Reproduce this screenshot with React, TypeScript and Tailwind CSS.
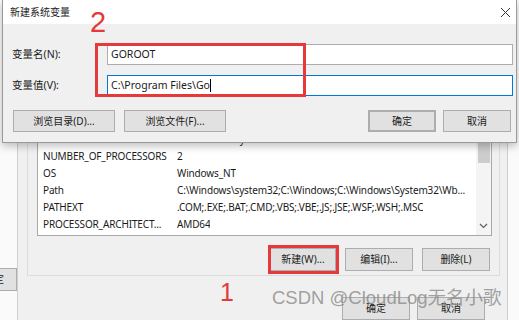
import React from "react";

const cjk = { fontFamily: '"Noto Sans", "Noto Sans CJK SC", sans-serif' };

function Btn({ children, className = "" }: { children: React.ReactNode; className?: string }) {
  return (
    <div
      className={`flex items-center justify-center bg-[#e1e1e1] border border-[#adadad] text-[10px] text-[#1a1a1a] ${className}`}
    >
      {children}
    </div>
  );
}

const rows: [string, string][] = [
  ["DriverData", "C:\\Windows\\System32\\Drivers\\DriverData"],
  ["NUMBER_OF_PROCESSORS", "2"],
  ["OS", "Windows_NT"],
  ["Path", "C:\\Windows\\system32;C:\\Windows;C:\\Windows\\System32\\Wb..."],
  ["PATHEXT", ".COM;.EXE;.BAT;.CMD;.VBS;.VBE;.JS;.JSE;.WSF;.WSH;.MSC"],
  ["PROCESSOR_ARCHITECT...", "AMD64"],
];

export default function App() {
  return (
    <div className="relative w-[519px] h-[320px] overflow-hidden bg-[#fafafa] text-[#1a1a1a]" style={cjk}>
      {/* background windows */}
      <div className="flex h-[320px]">
        {/* far-left window strip */}
        <div className="w-[17px] shrink-0 flex flex-col">
          <div className="mt-[268px] h-[23px] w-[17px] overflow-hidden bg-[#e1e1e1] border-y border-r border-[#adadad] flex items-center">
            <span className="ml-[-6px] text-[10px]">定</span>
          </div>
        </div>
        {/* environment variables window */}
        <div className="w-[491px] shrink-0 bg-[#f0f0f0] border-l border-r border-[#cfcfcf] flex flex-col">
          <div className="ml-[9px] mt-[60px] w-[473px] h-[223px] border border-[#dcdcdc] flex flex-col pl-[9px] pr-[7px] pt-[9px]">
            <div className="h-[166px] w-[455px] bg-white border border-[#a9a9a9] flex">
              <div className="flex-1 flex flex-col justify-end pb-[2px] pl-[5px] overflow-hidden text-[10px] tracking-[-0.15px]">
                {rows.map(([k, v]) => (
                  <div key={k} className="h-[17px] flex items-center whitespace-nowrap">
                    <span className="w-[134px] shrink-0">{k}</span>
                    <span className="overflow-hidden">{v}</span>
                  </div>
                ))}
              </div>
              <div className="w-[15px] bg-[#f4f4f4] flex flex-col items-center">
                <div className="mt-[40px] w-[12px] h-[52px] bg-[#cdcdcd]" />
                <div className="flex-1" />
                <svg width="9" height="6" viewBox="0 0 9 6" className="mb-[6px]">
                  <path d="M1 1 L4.5 4.5 L8 1" fill="none" stroke="#606060" strokeWidth="1.2" />
                </svg>
              </div>
            </div>
            <div className="mt-[12px] flex justify-end gap-[9px] pr-[2px]">
              <Btn className="w-[66px] h-[23px]">新建(W)...</Btn>
              <Btn className="w-[68px] h-[23px]">编辑(I)...</Btn>
              <Btn className="w-[68px] h-[23px]">删除(L)</Btn>
            </div>
          </div>
          <div className="mt-[21px] flex justify-end gap-[7px] pr-[22px]">
            <Btn className="w-[68px] h-[23px]">确定</Btn>
            <Btn className="w-[68px] h-[23px]">取消</Btn>
          </div>
        </div>
        <div className="flex-1 bg-[#fafafa]" />
      </div>

      {/* top dialog */}
      <div className="absolute left-[2px] top-0 w-[515px] h-[143px] border-x border-b border-[#9a9a9a] bg-[#f0f0f0] shadow-[0_3px_8px_rgba(0,0,0,0.25)] flex flex-col">
        <div className="h-[24px] bg-white flex items-center pl-[7px] pr-[5px] text-[10px]">
          <span>新建系统变量</span>
          <div className="flex-1" />
          <svg width="11" height="11" viewBox="0 0 11 11">
            <path d="M1 1 L10 10 M10 1 L1 10" stroke="#333" strokeWidth="1" />
          </svg>
        </div>
        <div className="flex flex-col pl-[9px] pr-[3px] pt-[20px]">
          <div className="flex items-center h-[21px]">
            <span className="w-[95px] text-[10.5px]">变量名(N):</span>
            <div className="w-[406px] h-[21px] bg-white border border-[#adadad] flex items-center pl-[3px] text-[10.5px]">
              GOROOT
            </div>
          </div>
          <div className="flex items-center h-[21px] mt-[10px]">
            <span className="w-[95px] text-[10.5px]">变量值(V):</span>
            <div className="w-[406px] h-[21px] bg-white border border-[#0078d7] flex items-center pl-[3px] text-[10.5px]">
              <span>C:\Program Files\Go</span>
              <span className="w-px h-[13px] bg-black" />
            </div>
          </div>
          <div className="flex items-center mt-[14px] h-[22px]">
            <Btn className="w-[102px] h-[22px] ml-[1px]">浏览目录(D)...</Btn>
            <Btn className="w-[102px] h-[22px] ml-[9px]">浏览文件(F)...</Btn>
            <div className="flex-1" />
            <Btn className="w-[68px] h-[22px] border-[#0078d7] border-2">确定</Btn>
            <Btn className="w-[68px] h-[22px] ml-[7px] mr-[2px]">取消</Btn>
          </div>
        </div>
      </div>

      {/* annotations */}
      <div className="absolute left-[95px] top-[43px] w-[211px] h-[54px] border-[3px] border-[#e5393b]" />
      <div
        className="absolute left-[90px] top-[8px] text-[29px] leading-none text-[#e5393b]"
        style={{ fontFamily: '"Liberation Sans", sans-serif' }}
      >
        2
      </div>
      <div className="absolute left-[268px] top-[245px] w-[71px] h-[29px] border-[3px] border-[#e5393b]" />
      <div
        className="absolute left-[220px] top-[280px] text-[25px] leading-none text-[#e5393b]"
        style={{ fontFamily: '"Liberation Sans", sans-serif' }}
      >
        1
      </div>
      <div
        className="absolute left-[272px] top-[289px] text-[18.5px] leading-none text-[#8a8a8a]/80 whitespace-nowrap"
        style={{ fontFamily: '"Liberation Sans", "Noto Sans CJK SC", sans-serif' }}
      >
        CSDN @CloudLog无名小歌
      </div>
    </div>
  );
}
